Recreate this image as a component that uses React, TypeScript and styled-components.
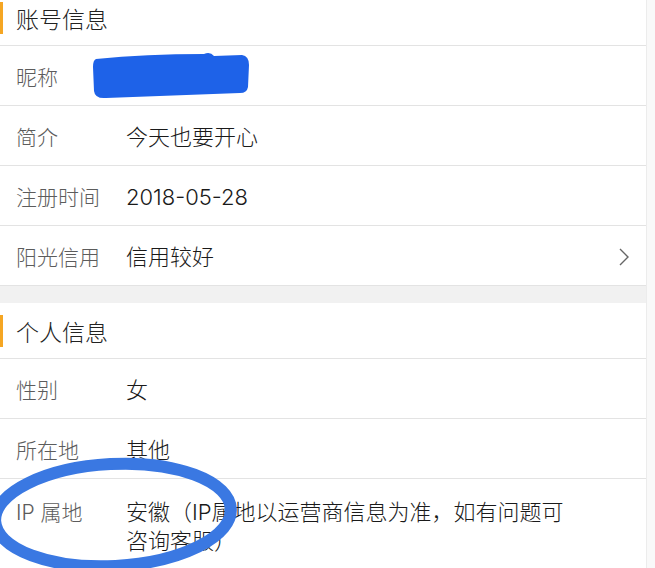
import React from 'react'
import styled, { createGlobalStyle } from 'styled-components'

type Row = {
  label: string
  value?: string
  arrow?: boolean
}

const accountRows: Row[] = [
  { label: '昵称' },
  { label: '简介', value: '今天也要开心' },
  { label: '注册时间', value: '2018-05-28' },
  { label: '阳光信用', value: '信用较好', arrow: true },
]

const personalRows: Row[] = [
  { label: '性别', value: '女' },
  { label: '所在地', value: '其他' },
]

const GlobalStyle = createGlobalStyle`
  html, body {
    margin: 0;
    padding: 0;
    background: #f9f9f9;
    overflow: hidden;
  }
  body {
    font-family: Inter, "Noto Sans CJK SC", "Noto Sans", sans-serif;
    -webkit-font-smoothing: antialiased;
  }
`

const Page = styled.div`
  position: relative;
  width: 646px;
  height: 568px;
  overflow: hidden;
  background: #fff;
  border-right: 1px solid #ececec;
`

const Scroll = styled.div`
  margin-top: -10px;
`

const Section = styled.section`
  background: #fff;
`

const Gap = styled.div`
  height: 17px;
  background: #f1f1f1;
`

const Header = styled.div`
  position: relative;
  display: flex;
  align-items: center;
  height: 56px;
  box-sizing: border-box;
  padding-left: 16px;
  border-bottom: 1px solid #e3e3e3;
  font-size: 23px;
  font-weight: 300;
  color: #222;

  &::before {
    content: '';
    position: absolute;
    left: 0;
    top: 12px;
    width: 3px;
    height: 32px;
    background: #f5a623;
  }
`

const Item = styled.div<{ $tall?: boolean }>`
  display: flex;
  align-items: ${(p) => (p.$tall ? 'flex-start' : 'center')};
  height: ${(p) => (p.$tall ? 'auto' : '60px')};
  box-sizing: border-box;
  padding: ${(p) => (p.$tall ? '19px 16px 20px 16px' : '3px 16px 0 16px')};
  border-bottom: 1px solid #e3e3e3;
`

const Label = styled.div`
  width: 110px;
  flex-shrink: 0;
  font-size: 21px;
  font-weight: 300;
  line-height: 29px;
  color: #5c5c5c;
`

const Value = styled.div`
  flex: 1;
  max-width: 455px;
  font-size: 22px;
  font-weight: 300;
  line-height: 29px;
  color: #1a1a1a;
`

const Arrow = styled.svg`
  margin-left: auto;
`

const Marker = styled.svg`
  position: absolute;
  pointer-events: none;
`

const ListRow = ({ row }: { row: Row }) => (
  <Item>
    <Label>{row.label}</Label>
    <Value>{row.value}</Value>
    {row.arrow && (
      <Arrow width="12" height="20" viewBox="0 0 12 20">
        <path d="M2 2 L10 10 L2 18" fill="none" stroke="#666" strokeWidth="1.4" />
      </Arrow>
    )}
  </Item>
)

export default function App() {
  return (
    <>
      <GlobalStyle />
      <Page>
        <Scroll>
          <Section>
            <Header>账号信息</Header>
            {accountRows.map((r) => (
              <ListRow key={r.label} row={r} />
            ))}
          </Section>
          <Gap />
          <Section>
            <Header>个人信息</Header>
            {personalRows.map((r) => (
              <ListRow key={r.label} row={r} />
            ))}
            <Item $tall>
              <Label>IP 属地</Label>
              <Value>安徽（IP属地以运营商信息为准，如有问题可咨询客服）</Value>
            </Item>
          </Section>
        </Scroll>

        {/* blue scribble hiding the nickname */}
        <Marker width="170" height="56" viewBox="0 0 170 56" style={{ left: 86, top: 47 }}>
          <path
            d="M10 12 Q60 7 118 7 Q124 4 128 9 L156 8 Q163 9 163 18 L162 40 Q161 46 154 46 L20 51 Q9 52 8 44 L7 20 Q7 13 10 12 Z"
            fill="#1e62e8"
          />
        </Marker>

        {/* blue circle around ip row */}
        <Marker width="260" height="130" viewBox="0 0 260 130" style={{ left: -20, top: 453 }}>
          <ellipse
            cx="133"
            cy="62"
            rx="118"
            ry="51"
            transform="rotate(-3 133 62)"
            fill="none"
            stroke="#3a78e2"
            strokeWidth="12"
          />
        </Marker>
      </Page>
    </>
  )
}
